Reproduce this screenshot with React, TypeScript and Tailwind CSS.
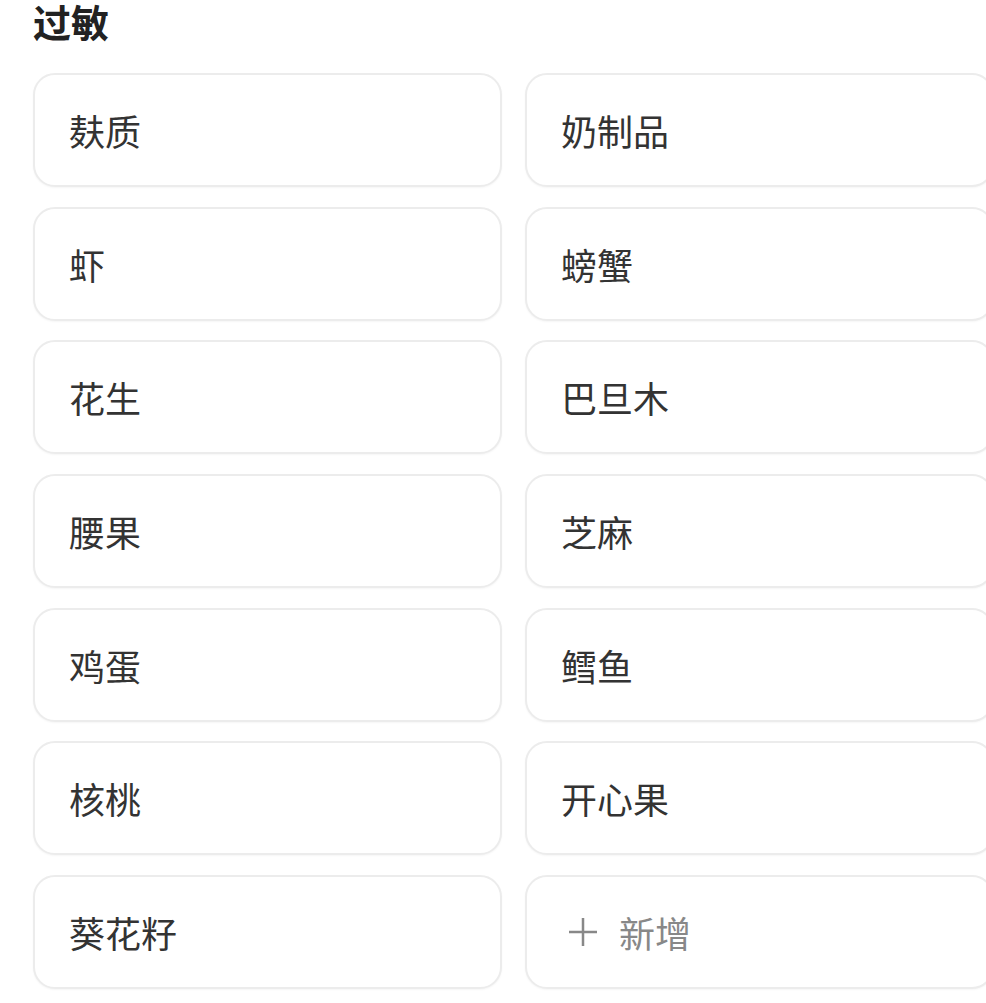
import React from 'react';

const items: string[] = [
  '麸质', '奶制品',
  '虾', '螃蟹',
  '花生', '巴旦木',
  '腰果', '芝麻',
  '鸡蛋', '鳕鱼',
  '核桃', '开心果',
  '葵花籽',
];

const font = { fontFamily: '"Noto Sans CJK SC", "Noto Sans", sans-serif' };

const App: React.FC = () => {
  return (
    <div className="w-[986px] h-[1003px] bg-white overflow-hidden" style={font}>
      <div className="pl-[33px]">
        {/* Title */}
        <h1 className="text-[38px] leading-[42px] font-bold text-[#222]">过敏</h1>

        {/* Allergy grid */}
        <div className="grid grid-cols-[469px_469px] gap-x-[23px] gap-y-[19.7px] mt-[31px] w-[961px]">
          {items.map((name) => (
            <div
              key={name}
              className="h-[114px] rounded-[22px] border-2 border-[#ececec] bg-white flex items-center pl-[34px] text-[36px] text-[#333] shadow-[0_1px_2px_rgba(0,0,0,0.04)]"
            >
              {name}
            </div>
          ))}
          <div className="h-[114px] rounded-[22px] border-2 border-[#ececec] bg-white flex items-center pl-[40px] text-[36px] text-[#888] shadow-[0_1px_2px_rgba(0,0,0,0.04)]">
            <svg width="32" height="32" viewBox="0 0 32 32" className="mr-[20px]">
              <path d="M16 2v28M2 16h28" stroke="#888" strokeWidth="2.5" fill="none" />
            </svg>
            新增
          </div>
        </div>
      </div>
    </div>
  );
};

export default App;
